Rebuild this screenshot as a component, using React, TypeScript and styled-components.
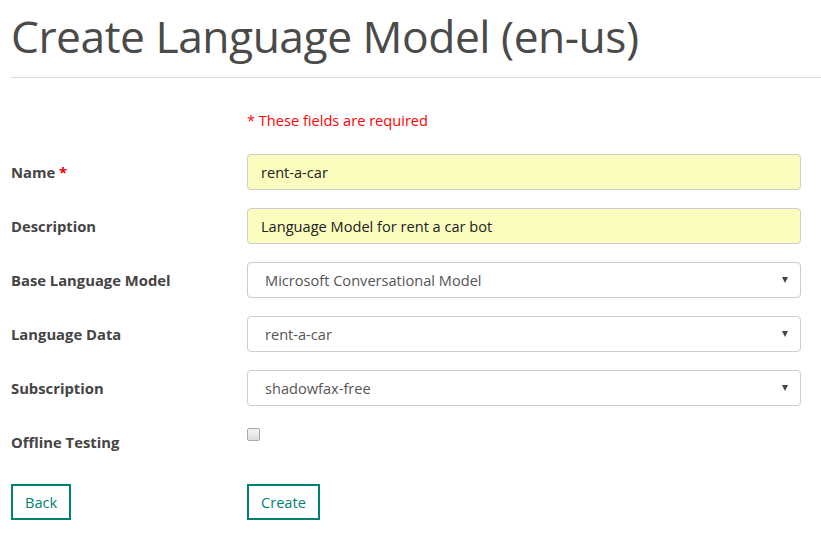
import React from "react";
import styled, { createGlobalStyle } from "styled-components";

const Global = createGlobalStyle`
  html, body { margin: 0; padding: 0; background: #fff; }
  body { font-family: "Open Sans", "Noto Sans", sans-serif; color: #444; }
  * { box-sizing: border-box; }
`;

const Page = styled.div`
  width: 821px;
  height: 544px;
  overflow: hidden;
  padding: 0 0 0 11px;
`;

const Title = styled.h1`
  margin: 0;
  padding-top: 8px;
  height: 77px;
  font-weight: 500;
  font-size: 44.4px;
  line-height: 56px;
  color: #4a4a4a;
  letter-spacing: -0.5px;
`;

const Rule = styled.hr`
  margin: 0;
  border: 0;
  border-top: 1px solid #d9d9d9;
`;

const Form = styled.div`
  padding: 29px 20px 0 0;
  display: flex;
  flex-direction: column;
`;

const Row = styled.div<{ $gap?: number }>`
  display: grid;
  grid-template-columns: 236px 1fr;
  align-items: center;
  min-height: 36px;
  margin-bottom: ${(p) => p.$gap ?? 18}px;
`;

const NoteRow = styled.div`
  display: grid;
  grid-template-columns: 236px 1fr;
  height: 26px;
  align-items: center;
  margin-bottom: 21px;
`;

const Required = styled.div`
  grid-column: 2;
  color: #f00;
  font-size: 14.6px;
`;

const Label = styled.label`
  font-weight: 700;
  font-size: 14.8px;
  color: #444;
`;

const Star = styled.span`
  color: #e00;
`;

const Input = styled.div`
  height: 36px;
  border: 1px solid #ccc;
  border-radius: 4px;
  background: #fafdbd;
  padding: 0 13px;
  display: flex;
  align-items: center;
  font-size: 14.6px;
  color: #222;
`;

const Select = styled.div`
  height: 36px;
  border: 1px solid #ccc;
  border-radius: 4px;
  background: #fff;
  padding: 0 12px 0 17px;
  display: flex;
  align-items: center;
  justify-content: space-between;
  font-size: 14.6px;
  color: #555;
`;

const Arrow = styled.span`
  width: 0;
  height: 0;
  border-left: 3.5px solid transparent;
  border-right: 3.5px solid transparent;
  border-top: 6px solid #444;
`;

const CheckCell = styled.div`
  align-self: start;
  padding-top: 4px;
  line-height: 0;
`;

const Check = styled.span`
  display: inline-block;
  width: 13px;
  height: 13px;
  border: 1px solid #a9a9a9;
  border-radius: 2px;
  background: linear-gradient(#f4f4f4, #dedede);
`;

const Button = styled.button`
  height: 36px;
  padding: 0 12px;
  background: #fff;
  border: 2px solid #008272;
  color: #008272;
  font-family: inherit;
  font-size: 14.6px;
  border-radius: 0;
  justify-self: start;
`;

const SelectField = ({ value }: { value: string }) => (
  <Select>
    <span>{value}</span>
    <Arrow />
  </Select>
);

export default function App() {
  return (
    <Page>
      <Global />
      <Title>Create Language Model (en-us)</Title>
      <Rule />
      <Form>
        <NoteRow>
          <Required>* These fields are required</Required>
        </NoteRow>
        <Row>
          <Label>
            Name <Star>*</Star>
          </Label>
          <Input>rent-a-car</Input>
        </Row>
        <Row>
          <Label>Description</Label>
          <Input>Language Model for rent a car bot</Input>
        </Row>
        <Row>
          <Label>Base Language Model</Label>
          <SelectField value="Microsoft Conversational Model" />
        </Row>
        <Row>
          <Label>Language Data</Label>
          <SelectField value="rent-a-car" />
        </Row>
        <Row>
          <Label>Subscription</Label>
          <SelectField value="shadowfax-free" />
        </Row>
        <Row $gap={24}>
          <Label>Offline Testing</Label>
          <CheckCell>
            <Check />
          </CheckCell>
        </Row>
        <Row>
          <Button>Back</Button>
          <Button>Create</Button>
        </Row>
      </Form>
    </Page>
  );
}
